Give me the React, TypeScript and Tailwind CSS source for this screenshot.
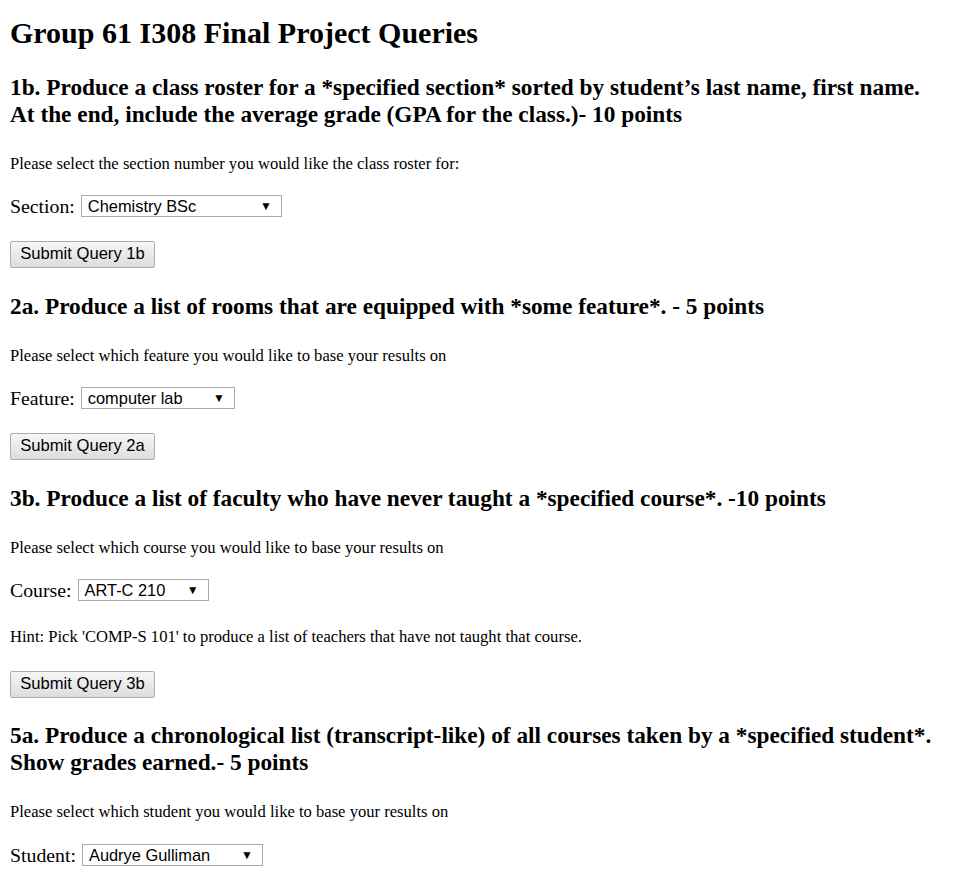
const serif = "font-['Times_New_Roman','Liberation_Serif',serif]";
const sans = "font-['Arial','Liberation_Sans',sans-serif]";

function Heading({ children, top }: { children: React.ReactNode; top: string }) {
  return (
    <h2 className={`${serif} ${top} whitespace-nowrap text-[23.3px] font-bold leading-[27px] text-black`}>
      {children}
    </h2>
  );
}

function Note({ children, top }: { children: React.ReactNode; top: string }) {
  return <p className={`${serif} ${top} text-[16.6px] leading-[18px] text-black`}>{children}</p>;
}

function Dropdown({ label, value, width, top }: { label: string; value: string; width: string; top: string }) {
  return (
    <div className={`${top} flex h-[22px] items-center gap-[6px]`}>
      <span className={`${serif} text-[19.8px] leading-[22px] text-black`}>{label}</span>
      <div
        className={`${sans} ${width} flex h-[22px] items-center justify-between border border-[#a9a9a9] bg-white pl-[6px] pr-[9px] text-[16.4px] text-black`}
      >
        <span>{value}</span>
        <span className="text-[12px]">▼</span>
      </div>
    </div>
  );
}

function SubmitButton({ label, top }: { label: string; top: string }) {
  return (
    <button
      className={`${sans} ${top} flex h-[27px] w-[145px] items-center justify-center rounded-[2px] border border-[#adadad] bg-gradient-to-b from-[#f6f6f6] to-[#dddddd] text-[16.6px] text-black`}
    >
      {label}
    </button>
  );
}

export default function App() {
  return (
    <div className="min-h-[886px] w-full bg-white px-[10px]">
      <div className="flex flex-col items-start">
        <h1 className={`${serif} mt-[17px] text-[30px] font-bold leading-[32px] text-black`}>
          Group 61 I308 Final Project Queries
        </h1>

        <Heading top="mt-[25px]">
          1b. Produce a class roster for a *specified section* sorted by student’s last name, first name.
          <br />
          At the end, include the average grade (GPA for the class.)- 10 points
        </Heading>
        <Note top="mt-[27px]">Please select the section number you would like the class roster for:</Note>
        <Dropdown label="Section:" value="Chemistry BSc" width="w-[201px]" top="mt-[22px]" />
        <SubmitButton label="Submit Query 1b" top="mt-[24px]" />

        <Heading top="mt-[25px]">
          2a. Produce a list of rooms that are equipped with *some feature*. - 5 points
        </Heading>
        <Note top="mt-[27px]">Please select which feature you would like to base your results on</Note>
        <Dropdown label="Feature:" value="computer lab" width="w-[154px]" top="mt-[22px]" />
        <SubmitButton label="Submit Query 2a" top="mt-[24px]" />

        <Heading top="mt-[25px]">
          3b. Produce a list of faculty who have never taught a *specified course*. -10 points
        </Heading>
        <Note top="mt-[27px]">Please select which course you would like to base your results on</Note>
        <Dropdown label="Course:" value="ART-C 210" width="w-[131px]" top="mt-[22px]" />
        <Note top="mt-[27px]">Hint: Pick 'COMP-S 101' to produce a list of teachers that have not taught that course.</Note>
        <SubmitButton label="Submit Query 3b" top="mt-[25px]" />

        <Heading top="mt-[24px]">
          5a. Produce a chronological list (transcript-like) of all courses taken by a *specified student*.
          <br />
          Show grades earned.- 5 points
        </Heading>
        <Note top="mt-[27px]">Please select which student you would like to base your results on</Note>
        <Dropdown label="Student:" value="Audrye Gulliman" width="w-[181px]" top="mt-[23px]" />
      </div>
    </div>
  );
}
